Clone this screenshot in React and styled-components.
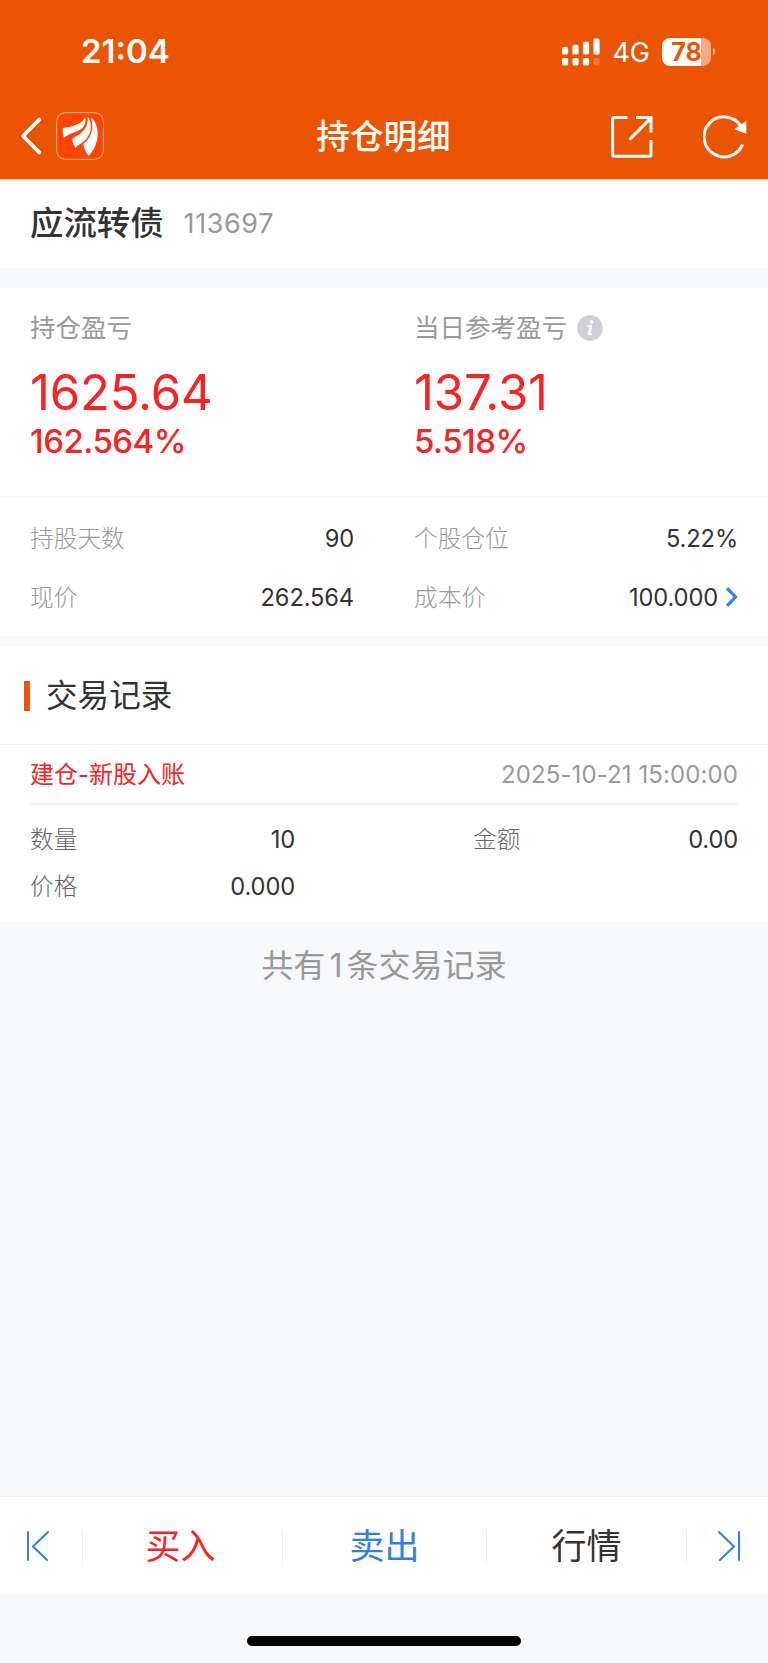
import React from 'react';
import styled, { createGlobalStyle } from 'styled-components';

const GlobalStyle = createGlobalStyle`
  * {
    box-sizing: border-box;
  }

  body {
    margin: 0;
    background: #f6f8fa;
    font-family: Inter, 'Noto Sans CJK SC', sans-serif;
    line-height: 1;
    color: #333;
  }
`;

const Page = styled.div`
  display: flex;
  flex-direction: column;
  width: 768px;
  height: 1663px;
  overflow: hidden;
  white-space: nowrap;
`;

const Header = styled.header`
  display: flex;
  flex-direction: column;
  height: 180px;
  background: #eb5502;
  border-bottom: 1px solid #f8c4a3;
  color: #fff;
`;

const StatusBar = styled.div`
  display: flex;
  align-items: center;
  justify-content: space-between;
  height: 103px;
  padding: 0 52px 0 81px;
`;

const Clock = styled.div`
  font-size: 33px;
  font-weight: 600;
`;

const StatusIcons = styled.div`
  display: flex;
  align-items: center;
`;

const Network = styled.div`
  margin: 2px 12px 0 12px;
  font-size: 27px;
`;

const Battery = styled.div`
  display: flex;
  align-items: center;
  justify-content: center;
  width: 49px;
  height: 28px;
  margin-right: 1px;
  padding-top: 1px;
  border-radius: 8px;
  background: linear-gradient(to right, #fff 39px, #f5aa82 39px);
  color: #eb5502;
  font-size: 25px;
  font-weight: 700;
`;

const NavBar = styled.div`
  display: grid;
  grid-template-columns: 1fr auto 1fr;
  align-items: center;
  height: 66px;
  padding: 0 21px 0 20px;
`;

const NavGroup = styled.div`
  display: flex;
  align-items: center;
  justify-content: ${(props) => (props.$end ? 'flex-end' : 'flex-start')};
  gap: ${(props) => props.$gap}px;
  padding-top: ${(props) => (props.$end ? 2 : 0)}px;
`;

const NavTitle = styled.h1`
  margin: 0;
  padding-top: 2px;
  font-size: 33.6px;
  font-weight: 500;
`;

const StockRow = styled.section`
  display: flex;
  align-items: center;
  height: 88px;
  padding: 0 30px;
  background: #fff;
`;

const StockName = styled.div`
  font-size: 33.4px;
  font-weight: 500;
`;

const StockCode = styled.div`
  margin-left: 20px;
  padding-bottom: 2px;
  font-size: 27px;
  letter-spacing: 0.6px;
  color: #999;
`;

const Gap = styled.div`
  height: ${(props) => props.$size}px;
`;

const Columns = styled.section`
  display: grid;
  grid-template-columns: 1fr 1fr;
  column-gap: ${(props) => props.$gap}px;
  padding: ${(props) => props.$padding};
  background: #fff;
`;

const ProfitPanel = styled(Columns)`
  height: 210px;
  border-bottom: 2px solid #f6f7f8;
`;

const ProfitLabel = styled.div`
  display: flex;
  align-items: center;
  gap: 10px;
  height: 28px;
  font-size: 25.5px;
  color: #999;
`;

const ProfitValue = styled.div`
  margin-top: 26px;
  font-size: 49px;
  letter-spacing: -0.15px;
  color: #f82323;
`;

const ProfitRate = styled.div`
  margin-top: 8px;
  font-size: 33px;
  font-weight: 500;
  letter-spacing: -0.5px;
  color: #f82323;
`;

const Field = styled.div`
  display: flex;
  align-items: center;
  justify-content: space-between;
  height: ${(props) => props.$height}px;
  font-size: 23.7px;
`;

const FieldLabel = styled.span`
  color: ${(props) => props.$color};
  font-weight: 300;
`;

const FieldValue = styled.span`
  display: flex;
  align-items: center;
  gap: 8px;
  letter-spacing: -0.15px;
`;

const SectionTitle = styled.h2`
  display: flex;
  align-items: center;
  gap: 16px;
  height: 99px;
  margin: 0;
  padding: 1px 0 0 24px;
  background: #fff;
  border-bottom: 1px solid #f1f2f3;
  font-size: 31.6px;
  font-weight: 400;

  &::before {
    content: '';
    width: 6px;
    height: 30px;
    background: #eb5502;
  }
`;

const RecordHeader = styled.div`
  display: flex;
  align-items: center;
  justify-content: space-between;
  height: 60px;
  margin: 0 30px;
  padding-top: 2px;
  border-bottom: 2px solid #f2f3f5;
  font-size: 24px;
`;

const Record = styled.section`
  height: 177px;
  background: #fff;
`;

const RecordType = styled.span`
  color: #f82323;
`;

const RecordTime = styled.span`
  letter-spacing: 0.1px;
  color: #999;
`;

const Total = styled.div`
  padding-top: 28px;
  font-size: 32px;
  text-align: center;
  color: #999;
`;

const TotalCount = styled.span`
  margin: 0 4px;
`;

const ActionBar = styled.nav`
  display: grid;
  grid-template-columns: 83px 200px 204px 200px 81px;
  align-items: center;
  height: 99px;
  margin-top: auto;
  background: #fff;
  border-top: 1px solid #f0f1f2;
`;

const Action = styled.div`
  display: flex;
  align-items: center;
  justify-content: center;
  height: 33px;
  padding: ${(props) => props.$padding || 0};
  border-right: ${(props) => (props.$last ? 'none' : '1px solid #eeeff0')};
  font-size: 35px;
  color: ${(props) => props.$color};
`;

const HomeArea = styled.footer`
  display: flex;
  justify-content: center;
  height: 68px;
  padding-top: 41px;
`;

const HomeIndicator = styled.div`
  width: 274px;
  height: 10px;
  border-radius: 5px;
  background: #000;
`;

const SignalIcon = () => (
  <svg width="38" height="28" viewBox="0 0 38 28" fill="#fff">
    <rect x="0" y="9" width="6.2" height="7.6" rx="1.7" />
    <rect x="10.4" y="6.8" width="6.2" height="9.8" rx="1.7" />
    <rect x="20.9" y="3.8" width="6.2" height="12.8" rx="1.7" />
    <rect x="31.4" y="0.4" width="6.2" height="16.2" rx="1.7" />
    <rect x="0" y="20" width="6.2" height="7.4" rx="1.7" />
    <rect x="10.4" y="20" width="6.2" height="7.4" rx="1.7" />
    <rect x="20.9" y="20" width="6.2" height="7.4" rx="1.7" />
    <rect x="31.4" y="20" width="6.2" height="7.4" rx="1.7" opacity="0.22" />
  </svg>
);

const BatteryCap = () => (
  <svg width="4" height="9" viewBox="0 0 4 9" fill="#f5aa82">
    <path d="M1 0.5C4 2 4 7 1 8.5Z" />
  </svg>
);

const BackIcon = () => (
  <svg width="22" height="38" viewBox="0 0 22 38" fill="none" stroke="#fff" strokeWidth="3.8" strokeLinecap="round" strokeLinejoin="round">
    <path d="M19.2 2.6L3 19L19.2 35.4" />
  </svg>
);

const BrandLogo = () => (
  <svg width="48" height="48" viewBox="0 0 144 144">
    <rect x="2" y="2" width="140" height="140" rx="27" fill="#ff4400" stroke="#f9b99a" strokeWidth="3" />
    <g fill="#fff">
      <path d="M20 48C44 44 76 40 88 15C92 40 80 54 52 62C40 66 32 70 24 77Q18 62 20 48Z" />
      <path d="M95 13C99 46 80 64 48 80Q50 96 58 108Q64 100 76 94C108 74 112 36 95 13Z" />
      <path d="M105 16C114 50 108 76 82 96Q84 116 98 132C112 118 125 92 125 66C125 44 118 28 105 16Z" />
    </g>
  </svg>
);

const ShareIcon = () => (
  <svg width="42" height="42" viewBox="0 0 42 42" fill="none" stroke="#fff" strokeWidth="3">
    <path d="M16.5 1.6H3.4Q1.6 1.6 1.6 3.4V38.4Q1.6 40.2 3.4 40.2H38.2Q40 40.2 40 38.4V24" />
    <path d="M25 1.6H40V16.6" />
    <path d="M18.5 23.6L39.6 2.4" />
  </svg>
);

const RefreshIcon = () => (
  <svg width="44" height="44" viewBox="0 0 44 44">
    <path d="M39.6 29.4A20 20 0 1 1 37.6 10.6" fill="none" stroke="#fff" strokeWidth="3" />
    <path d="M43.4 6V18.8L31 14.2Z" fill="#fff" />
  </svg>
);

const InfoIcon = () => (
  <svg width="26" height="26" viewBox="0 0 26 26">
    <circle cx="13" cy="13" r="12.8" fill="#cdd1d7" />
    <circle cx="14.7" cy="6.9" r="1.8" fill="#fff" />
    <path d="M9.8 11.6L14.4 10.4L12.2 19.2Q12 20.6 15 18.6" fill="none" stroke="#fff" strokeWidth="1.3" />
    <path d="M13.9 11L12 19.6" stroke="#fff" strokeWidth="2.4" />
  </svg>
);

const ChevronIcon = () => (
  <svg width="12" height="20" viewBox="0 0 12 20" fill="none" stroke="#2f82ee" strokeWidth="3.2">
    <path d="M1 1.2L9.6 10L1 18.8" />
  </svg>
);

const EdgeIcon = ({ flip }) => (
  <svg width="24" height="32" viewBox="0 0 24 32" fill="none" stroke="#2f7fe6" strokeWidth="2" strokeLinecap="round">
    <path d={flip ? 'M2 2L17 16.5L3 30M22 2V30' : 'M22 2L7 16.5L21 30M2 2V30'} />
  </svg>
);

const InfoField = ({ label, value, height, color, arrow }) => (
  <Field $height={height}>
    <FieldLabel $color={color}>{label}</FieldLabel>
    <FieldValue>
      {value}
      {arrow && <ChevronIcon />}
    </FieldValue>
  </Field>
);

const Profit = ({ label, value, rate, info }) => (
  <div>
    <ProfitLabel>
      {label}
      {info && <InfoIcon />}
    </ProfitLabel>
    <ProfitValue>{value}</ProfitValue>
    <ProfitRate>{rate}</ProfitRate>
  </div>
);

export default function App() {
  return (
    <Page>
      <GlobalStyle />
      <Header>
        <StatusBar>
          <Clock>21:04</Clock>
          <StatusIcons>
            <SignalIcon />
            <Network>4G</Network>
            <Battery>78</Battery>
            <BatteryCap />
          </StatusIcons>
        </StatusBar>
        <NavBar>
          <NavGroup $gap={14}>
            <BackIcon />
            <BrandLogo />
          </NavGroup>
          <NavTitle>持仓明细</NavTitle>
          <NavGroup $end $gap={50}>
            <ShareIcon />
            <RefreshIcon />
          </NavGroup>
        </NavBar>
      </Header>

      <StockRow>
        <StockName>应流转债</StockName>
        <StockCode>113697</StockCode>
      </StockRow>
      <Gap $size={20} />

      <ProfitPanel $gap={60} $padding="26px 30px 0">
        <Profit label="持仓盈亏" value="1625.64" rate="162.564%" />
        <Profit label="当日参考盈亏" value="137.31" rate="5.518%" info />
      </ProfitPanel>
      <Columns $gap={60} $padding="11px 30px 9px">
        <InfoField label="持股天数" value="90" height={59} color="#999" />
        <InfoField label="个股仓位" value="5.22%" height={59} color="#999" />
        <InfoField label="现价" value="262.564" height={59} color="#999" />
        <InfoField label="成本价" value="100.000" height={59} color="#999" arrow />
      </Columns>
      <Gap $size={10} />

      <SectionTitle>交易记录</SectionTitle>
      <Record>
        <RecordHeader>
          <RecordType>建仓-新股入账</RecordType>
          <RecordTime>2025-10-21 15:00:00</RecordTime>
        </RecordHeader>
        <Columns $gap={178} $padding="11px 30px 0">
          <InfoField label="数量" value="10" height={47} color="#666" />
          <InfoField label="金额" value="0.00" height={47} color="#666" />
          <InfoField label="价格" value="0.000" height={47} color="#666" />
        </Columns>
      </Record>
      <Total>
        共有<TotalCount>1</TotalCount>条交易记录
      </Total>

      <ActionBar>
        <Action $padding="0 6px 0 0">
          <EdgeIcon />
        </Action>
        <Action $color="#f82323" $padding="0 4px 0 0">
          买入
        </Action>
        <Action $color="#2f7fe6">卖出</Action>
        <Action $color="#333">行情</Action>
        <Action $last $padding="0 0 0 3px">
          <EdgeIcon flip />
        </Action>
      </ActionBar>
      <HomeArea>
        <HomeIndicator />
      </HomeArea>
    </Page>
  );
}
